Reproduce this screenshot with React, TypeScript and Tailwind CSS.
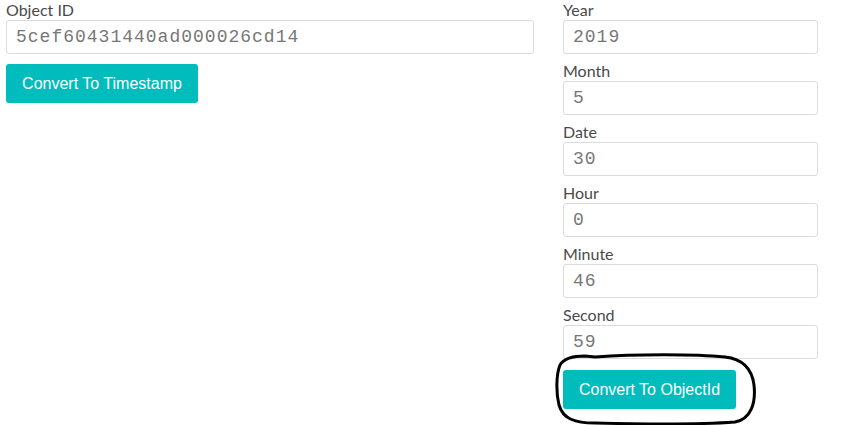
const fields = [
  { label: "Year", value: "2019" },
  { label: "Month", value: "5" },
  { label: "Date", value: "30" },
  { label: "Hour", value: "0" },
  { label: "Minute", value: "46" },
  { label: "Second", value: "59" },
];

function Field({ label, value, width }: { label: string; value: string; width: string }) {
  return (
    <div className="flex flex-col">
      <label className="h-[20px] text-[16px] leading-[20px] text-[#4a4a4a] font-['Lato',sans-serif]">{label}</label>
      <input
        readOnly
        value={value}
        className={`${width} h-[34px] rounded-[3px] border border-[#dcdcdc] bg-white px-[9px] text-[18px] tracking-[1px] text-[#777] font-['Liberation_Mono',monospace] outline-none`}
      />
    </div>
  );
}

function TealButton({ children, width }: { children: string; width: string }) {
  return (
    <button
      className={`${width} h-[39px] rounded-[3px] bg-[#00bcbc] text-white text-[16px] font-['Liberation_Sans',Arial,sans-serif]`}
    >
      {children}
    </button>
  );
}

export default function App() {
  return (
    <div className="w-[842px] h-[425px] bg-white flex pl-[6px] relative">
      <div className="flex flex-col gap-[10px] w-[528px]">
        <Field label="Object ID" value="5cef60431440ad000026cd14" width="w-[528px]" />
        <TealButton width="w-[192px]">Convert To Timestamp</TealButton>
      </div>

      <div className="ml-[29px] flex flex-col">
        <div className="flex flex-col gap-[7px]">
          {fields.map((f) => (
            <Field key={f.label} label={f.label} value={f.value} width="w-[255px]" />
          ))}
        </div>
        <div className="mt-[11px] relative">
          <TealButton width="w-[173px]">Convert To ObjectId</TealButton>
          {/* hand-drawn marker around the button */}
          <svg
            className="absolute left-[-8px] top-[-17px] pointer-events-none"
            width="210"
            height="74"
            viewBox="0 0 210 74"
          >
            <path
              d="M40 4 C80 1 140 1 170 4 C188 6 197 16 199 32 C201 50 196 66 180 69 C140 72 80 71 40 70 C20 70 8 66 4 52 C1 40 1 22 5 12 C9 5 18 3 30 3 Z"
              fill="none"
              stroke="#000"
              strokeWidth="3"
              strokeLinejoin="round"
            />
          </svg>
        </div>
      </div>
    </div>
  );
}
